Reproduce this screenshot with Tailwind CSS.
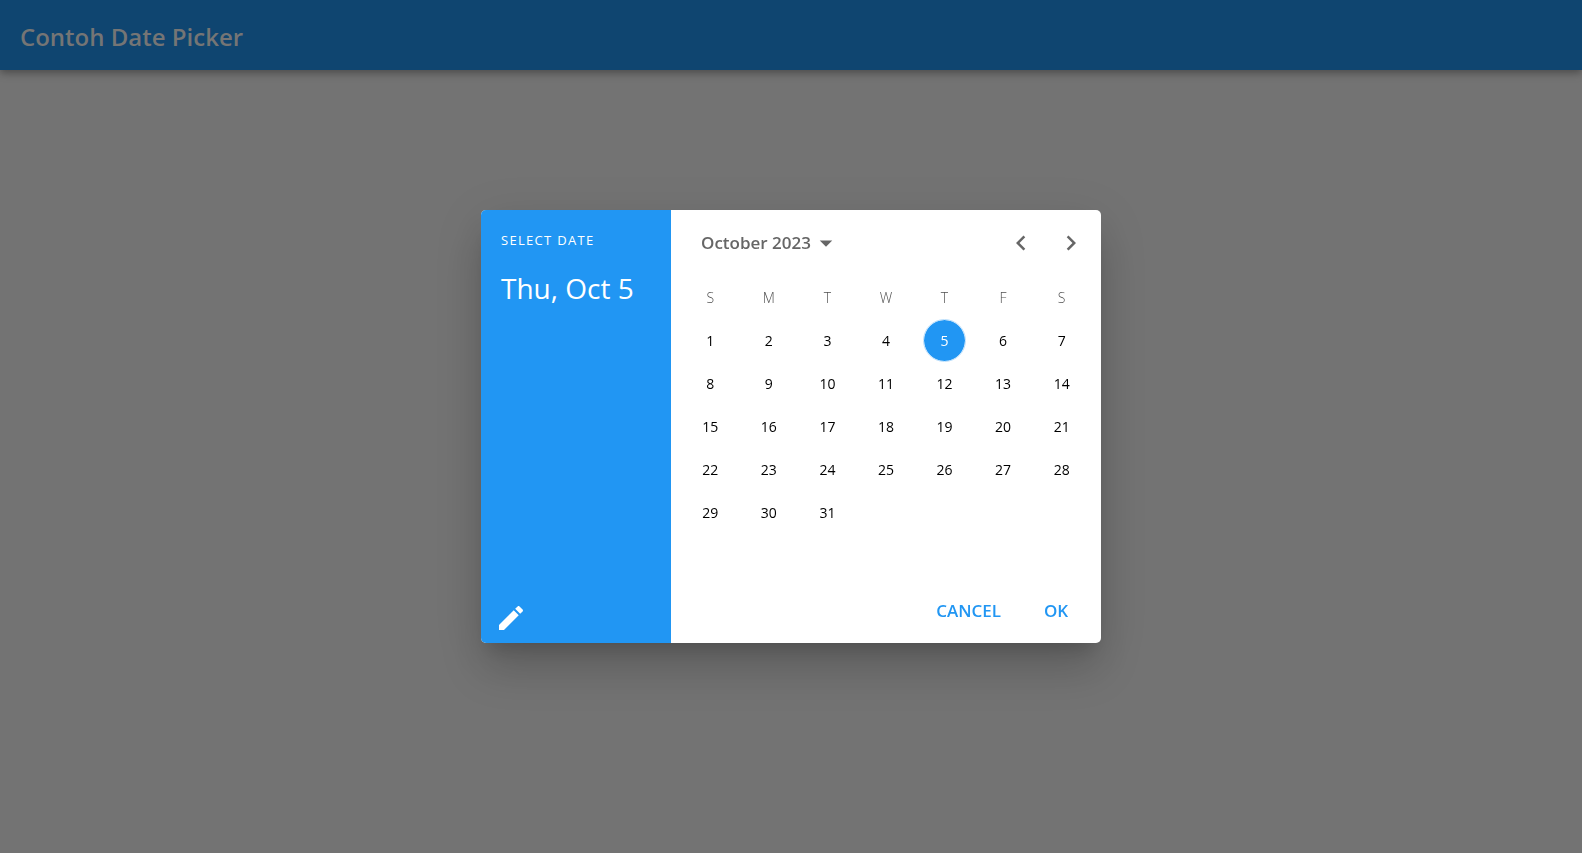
<!DOCTYPE html>
<html lang="id">
<head>
<meta charset="utf-8">
<meta name="viewport" content="width=device-width, initial-scale=1">
<title>Contoh Date Picker</title>
<script src="https://cdn.jsdelivr.net/npm/@tailwindcss/browser@4"></script>
</head>
<body class="flex min-h-screen flex-col bg-[#737373] font-['Open_Sans','Noto_Sans',sans-serif]">
<header class="flex h-[70px] items-center bg-[#0f4570] px-5 pt-1 shadow-[0_3px_8px_rgba(0,0,0,0.35)]">
  <h1 class="text-2xl font-semibold text-[#757575]">Contoh Date Picker</h1>
</header>

<div class="fixed inset-0 flex items-center justify-center p-4">
  <section role="dialog" aria-modal="true" aria-label="Select date" class="flex w-full max-w-[620px] overflow-hidden rounded-[5px] bg-white shadow-[0_14px_18px_-9px_rgba(0,0,0,0.16),0_28px_44px_0px_rgba(0,0,0,0.14),0_11px_50px_4px_rgba(0,0,0,0.08)]">
    <div class="flex w-[190px] shrink-0 flex-col items-start bg-[#2196f3] px-5 pt-5 text-white">
      <p class="text-[13px] leading-5 tracking-widest whitespace-nowrap">SELECT DATE</p>
      <p class="mt-5 text-[28px] leading-9 whitespace-nowrap">Thu, Oct 5</p>
      <button type="button" aria-label="Switch to input" class="mt-auto -ml-1.5 mb-[9px]">
        <svg class="size-8" viewBox="0 0 24 24" fill="currentColor"><path d="M3 17.25V21h3.75L17.81 9.94l-3.75-3.75L3 17.25zM20.71 7.04c.39-.39.39-1.02 0-1.41l-2.34-2.34c-.39-.39-1.02-.39-1.41 0l-1.83 1.83 3.75 3.75 1.83-1.83z"/></svg>
      </button>
    </div>

    <div class="flex min-w-0 flex-1 flex-col">
      <div class="flex h-[65px] items-center justify-between pr-[5px] pl-[30px] text-[#666666]">
        <button type="button" class="flex items-center text-[17px] font-semibold">October 2023<svg class="size-[30px]" viewBox="0 0 24 24" fill="currentColor"><path d="M7 10l5 5 5-5z"/></svg></button>
        <div class="flex">
          <button type="button" aria-label="Previous month" class="flex h-[50px] w-[50px] items-center justify-center"><svg class="size-[30px]" viewBox="0 0 24 24" fill="currentColor"><path d="M15.41 7.41L14 6l-6 6 6 6 1.41-1.41L10.83 12z"/></svg></button>
          <button type="button" aria-label="Next month" class="flex h-[50px] w-[50px] items-center justify-center"><svg class="size-[30px]" viewBox="0 0 24 24" fill="currentColor"><path d="M10 6L8.59 7.41 13.17 12l-4.58 4.59L10 18l6-6z"/></svg></button>
        </div>
      </div>

      <div class="px-[10px] pt-px">
        <table class="w-full table-fixed border-collapse text-center text-sm text-black">
          <thead>
            <tr class="h-[43px] text-[#505050]"><th class="p-0 font-light">S</th><th class="p-0 font-light">M</th><th class="p-0 font-light">T</th><th class="p-0 font-light">W</th><th class="p-0 font-light">T</th><th class="p-0 font-light">F</th><th class="p-0 font-light">S</th></tr>
          </thead>
          <tbody>
            <tr class="h-[43px]"><td class="p-0"><button type="button">1</button></td><td class="p-0"><button type="button">2</button></td><td class="p-0"><button type="button">3</button></td><td class="p-0"><button type="button">4</button></td><td class="p-0"><button type="button" aria-pressed="true" class="mx-auto flex size-[43px] items-center justify-center rounded-full border border-[#bcdffb] bg-[#2196f3] bg-clip-padding text-white">5</button></td><td class="p-0"><button type="button">6</button></td><td class="p-0"><button type="button">7</button></td></tr>
            <tr class="h-[43px]"><td class="p-0"><button type="button">8</button></td><td class="p-0"><button type="button">9</button></td><td class="p-0"><button type="button">10</button></td><td class="p-0"><button type="button">11</button></td><td class="p-0"><button type="button">12</button></td><td class="p-0"><button type="button">13</button></td><td class="p-0"><button type="button">14</button></td></tr>
            <tr class="h-[43px]"><td class="p-0"><button type="button">15</button></td><td class="p-0"><button type="button">16</button></td><td class="p-0"><button type="button">17</button></td><td class="p-0"><button type="button">18</button></td><td class="p-0"><button type="button">19</button></td><td class="p-0"><button type="button">20</button></td><td class="p-0"><button type="button">21</button></td></tr>
            <tr class="h-[43px]"><td class="p-0"><button type="button">22</button></td><td class="p-0"><button type="button">23</button></td><td class="p-0"><button type="button">24</button></td><td class="p-0"><button type="button">25</button></td><td class="p-0"><button type="button">26</button></td><td class="p-0"><button type="button">27</button></td><td class="p-0"><button type="button">28</button></td></tr>
            <tr class="h-[43px]"><td class="p-0"><button type="button">29</button></td><td class="p-0"><button type="button">30</button></td><td class="p-0"><button type="button">31</button></td><td></td><td></td><td></td><td></td></tr>
          </tbody>
        </table>
      </div>

      <div class="mt-11 flex h-[65px] items-center justify-end gap-[10px] px-[10px] text-[17px] font-semibold text-[#2196f3]">
        <button type="button" class="h-[45px] min-w-[80px] px-[10px]">CANCEL</button>
        <button type="button" class="h-[45px] min-w-[70px] px-[10px]">OK</button>
      </div>
    </div>
  </section>
</div>
</body>
</html>
